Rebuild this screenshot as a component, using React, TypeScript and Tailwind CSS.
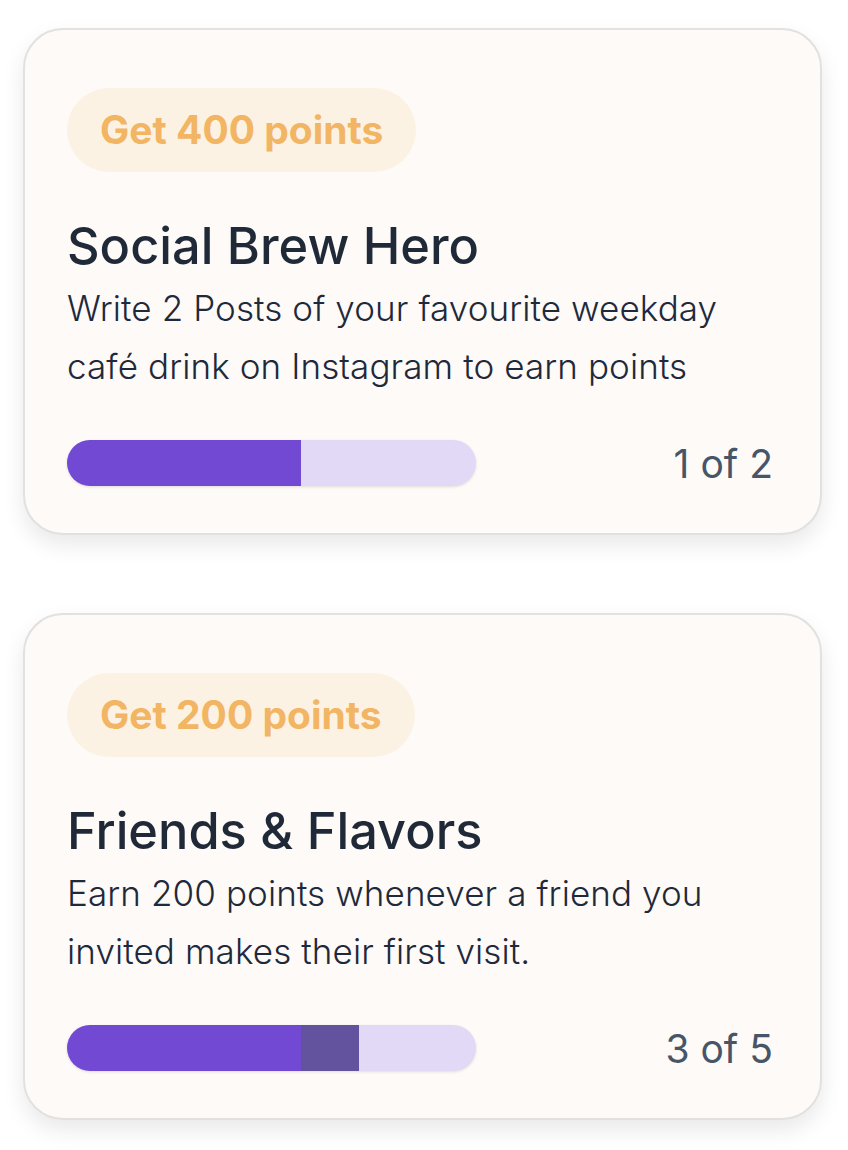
const challenges = [
  {
    reward: "Get 400 points",
    title: "Social Brew Hero",
    description: "Write 2 Posts of your favourite weekday café drink on Instagram to earn points",
    done: 1,
    total: 2,
    extra: false,
  },
  {
    reward: "Get 200 points",
    title: "Friends & Flavors",
    description: "Earn 200 points whenever a friend you invited makes their first visit.",
    done: 3,
    total: 5,
    extra: true,
  },
];

function ProgressBar({ extra }: { extra: boolean }) {
  return (
    <div className="flex h-[46px] w-[409px] overflow-hidden rounded-full bg-[#e2d9f7] shadow-[0_1px_3px_rgba(0,0,0,0.12)]">
      <div className="h-full w-[234px] bg-[#7149d2]" />
      {extra && <div className="h-full w-[58px] bg-[#63529e]" />}
    </div>
  );
}

export default function App() {
  return (
    <div className="min-h-[1150px] bg-white pl-[23px] pr-[26px] pt-[28px] font-['Inter',sans-serif]">
      <div className="flex flex-col gap-[78px]">
        {challenges.map((c) => (
          <div
            key={c.title}
            className="rounded-[40px] border-2 border-[#e3e1df] bg-[#fdfaf7] pb-[47px] pl-[42px] pr-[47px] pt-[58px] shadow-[0_10px_22px_rgba(0,0,0,0.09)]"
          >
            <span className="inline-flex h-[84px] items-center rounded-full bg-[#fcf2e3] px-[33px] text-[39px] font-bold text-[#f2b563]">
              {c.reward}
            </span>

            <h2 className="mt-[44px] text-[50.5px] font-medium leading-[60px] text-[#1f2937]">{c.title}</h2>
            <p className="mt-[3px] text-[35px] font-light leading-[58px] tracking-[0.1px] text-[#1e293b]">
              {c.description}
            </p>

            <div className="mt-[45px] flex items-center justify-between">
              <ProgressBar extra={c.extra} />
              <span className="text-[39px] leading-none text-[#475569]">
                {c.done} of {c.total}
              </span>
            </div>
          </div>
        ))}
      </div>
    </div>
  );
}
